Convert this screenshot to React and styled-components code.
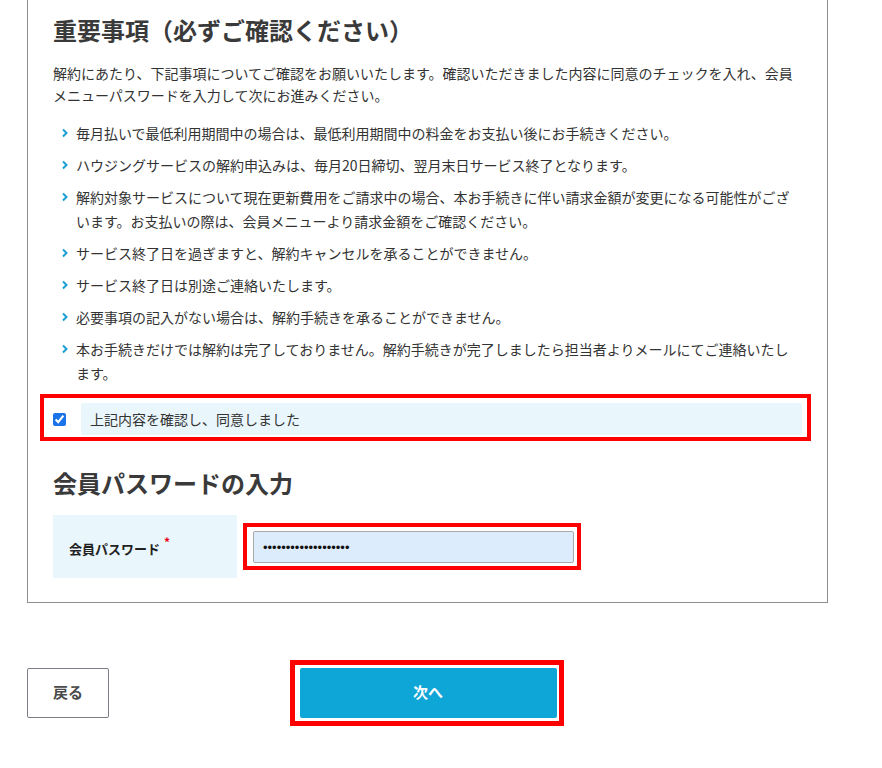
import React from 'react';
import styled, {createGlobalStyle} from 'styled-components';

const notes = [
    "毎月払いで最低利用期間中の場合は、最低利用期間中の料金をお支払い後にお手続きください。",
    "ハウジングサービスの解約申込みは、毎月20日締切、翌月末日サービス終了となります。",
    "解約対象サービスについて現在更新費用をご請求中の場合、本お手続きに伴い請求金額が変更になる可能性がございます。お支払いの際は、会員メニューより請求金額をご確認ください。",
    "サービス終了日を過ぎますと、解約キャンセルを承ることができません。",
    "サービス終了日は別途ご連絡いたします。",
    "必要事項の記入がない場合は、解約手続きを承ることができません。",
    "本お手続きだけでは解約は完了しておりません。解約手続きが完了しましたら担当者よりメールにてご連絡いたします。"
];

function Chevron()
{
    return (
        <ChevronIcon viewBox="0 0 8 10" aria-hidden="true">
            <polyline points="2,1.5 5.5,5 2,8.5" fill="none" stroke="#1a9ed6" strokeWidth="2" />
        </ChevronIcon>
    );
}

function App()
{
    return (
        <>
            <GlobalStyle />
            <Page>
                <Card>
                    <Heading>重要事項（必ずご確認ください）</Heading>
                    <Lead>
                        解約にあたり、下記事項についてご確認をお願いいたします。確認いただきました内容に同意のチェックを入れ、会員メニューパスワードを入力して次にお進みください。
                    </Lead>
                    <NoteList>
                        {notes.map((note, i) => (
                            <NoteItem key={i}>
                                <Chevron />
                                <span>{note}</span>
                            </NoteItem>
                        ))}
                    </NoteList>
                    <AgreeRow>
                        <CheckBox type="checkbox" defaultChecked id="agree" />
                        <AgreeLabel htmlFor="agree">上記内容を確認し、同意しました</AgreeLabel>
                    </AgreeRow>

                    <Heading $spaced>会員パスワードの入力</Heading>
                    <FormTable>
                        <tbody>
                            <tr>
                                <LabelCell>
                                    会員パスワード<Required>*</Required>
                                </LabelCell>
                                <FieldCell>
                                    <Highlight>
                                        <PasswordInput type="password" readOnly defaultValue="passwordpassword123" />
                                    </Highlight>
                                </FieldCell>
                            </tr>
                        </tbody>
                    </FormTable>
                </Card>

                <ButtonRow>
                    <BackButton type="button">戻る</BackButton>
                    <ButtonFrame>
                        <NextButton type="button">次へ</NextButton>
                    </ButtonFrame>
                    <span />
                </ButtonRow>
            </Page>
        </>
    );
}

const GlobalStyle = createGlobalStyle`
    body
    {
        margin: 0;
        background: #fff;
        color: #333;
        font-family: "Noto Sans CJK JP", "Noto Sans", sans-serif;
        font-size: 14px;
    }
    *
    {
        box-sizing: border-box;
    }
`;

const Page = styled.div`
    width: 855px;
    padding: 0 0 40px 27px;
`;

const Card = styled.div`
    width: 801px;
    border: 1px solid #8e8e8e;
    border-top: none;
    padding: 13px 28px 24px 25px;
`;

const Heading = styled.h2`
    margin: ${props => props.$spaced ? '29px' : '0'} 0 0;
    font-size: 24px;
    line-height: 34px;
    font-weight: 700;
    color: #3a3a3a;
`;

const Lead = styled.p`
    margin: 15px 0 0;
    line-height: 22px;
`;

const NoteList = styled.ul`
    list-style: none;
    margin: 15px 0 0;
    padding: 0;
    display: flex;
    flex-direction: column;
    gap: 8px;
`;

const NoteItem = styled.li`
    display: flex;
    align-items: flex-start;
    line-height: 24px;
    padding-left: 8px;
`;

const ChevronIcon = styled.svg`
    flex: none;
    width: 8px;
    height: 10px;
    margin: 7px 7px 0 0;
`;

const AgreeRow = styled.div`
    display: flex;
    align-items: center;
    margin: 13px -8px 0 -9px;
    padding: 5px 5px 2px 9px;
    outline: 4px solid #f00;
`;

const CheckBox = styled.input`
    width: 13px;
    height: 13px;
    margin: 0 15px 0 0;
    accent-color: #1a73e8;
`;

const AgreeLabel = styled.label`
    flex: 1;
    background: #e9f6fc;
    border-radius: 2px;
    line-height: 32px;
    padding: 0 9px;
`;

const FormTable = styled.table`
    margin-top: 15px;
    border-collapse: collapse;
`;

const LabelCell = styled.th`
    width: 184px;
    height: 63px;
    background: #e9f6fc;
    text-align: left;
    padding: 0 0 0 16px;
    font-size: 13px;
    font-weight: 700;
    color: #222;
    vertical-align: middle;
`;

const Required = styled.sup`
    color: #e60012;
    font-size: 12px;
    margin-left: 4px;
    position: relative;
    top: -2px;
`;

const FieldCell = styled.td`
    padding: 0 0 0 6px;
    vertical-align: middle;
`;

const Highlight = styled.div`
    display: inline-flex;
    border: 4px solid #f00;
    padding: 4px 3px 3px 6px;
`;

const PasswordInput = styled.input`
    width: 321px;
    height: 32px;
    background: #ddecfc;
    border: 1px solid #a9a9a9;
    border-radius: 2px;
    padding: 0 9px;
    font-size: 13px;
    color: #111;
    outline: none;
`;

const ButtonRow = styled.div`
    width: 801px;
    margin-top: 57px;
    display: grid;
    grid-template-columns: 1fr auto 1fr;
    align-items: center;
`;

const BackButton = styled.button`
    justify-self: start;
    width: 82px;
    height: 50px;
    background: #fff;
    border: 1px solid #7d7d86;
    border-radius: 2px;
    font-family: inherit;
    font-size: 15px;
    font-weight: 700;
    line-height: 1;
    padding: 0 0 3px;
    color: #4a4a4a;
`;

const ButtonFrame = styled.div`
    display: flex;
    border: 5px solid #f00;
    padding: 3px 2px 3px 5px;
    margin-right: 2px;
`;

const NextButton = styled.button`
    width: 257px;
    height: 50px;
    background: #0ea5d7;
    border: none;
    border-radius: 2px;
    font-family: inherit;
    font-size: 15px;
    font-weight: 700;
    line-height: 1;
    padding: 0 0 3px;
    color: #fff;
`;

export default App;
